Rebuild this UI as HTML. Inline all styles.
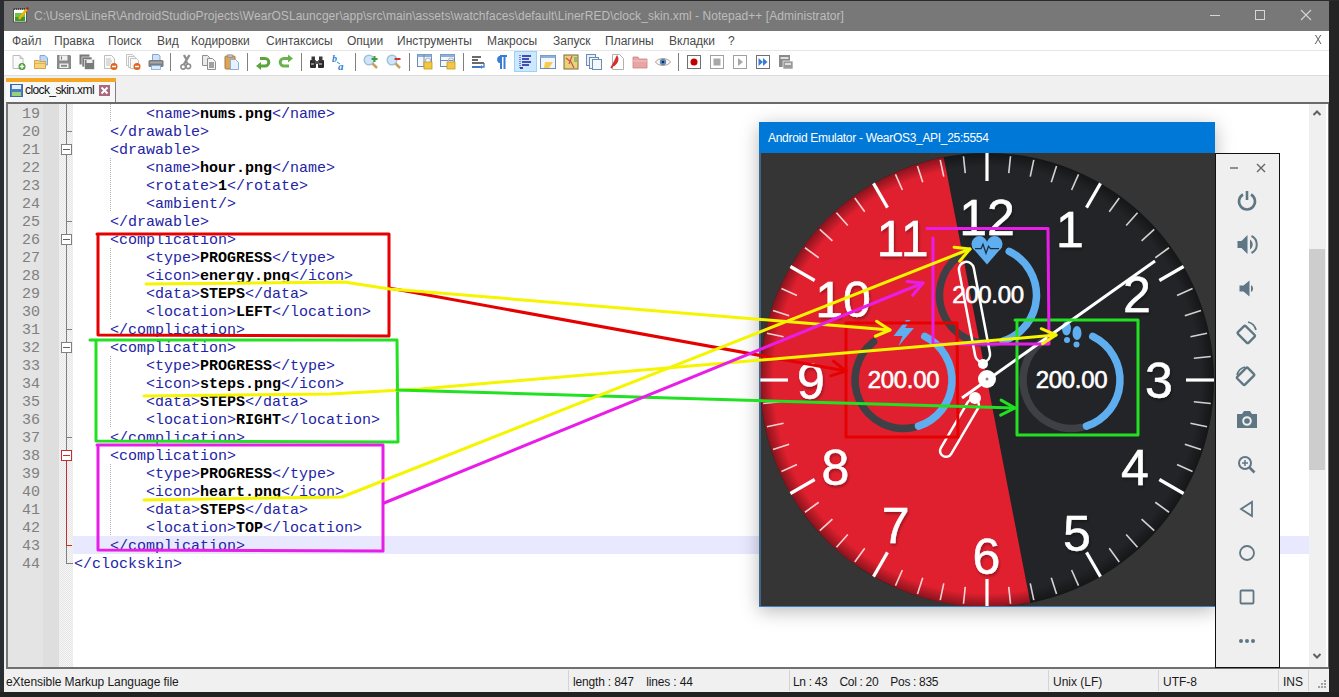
<!DOCTYPE html><html><head><meta charset="utf-8"><style>
*{margin:0;padding:0;box-sizing:border-box}
html,body{width:1339px;height:697px;overflow:hidden}
body{position:relative;background:#26292d;font-family:"Liberation Sans",sans-serif}
.a{position:absolute}
.code{font-family:"Liberation Mono",monospace;font-size:15px;line-height:18px;white-space:pre}
.t{color:#2424a6}
.b{color:#000;font-weight:bold}
.ln{color:#808080;text-align:right;width:32px}
.menu span{position:absolute;top:0;font-size:12px;color:#4a4a4a}
.st{font-size:12px;color:#1a1a1a;position:absolute;top:675px}
.sep{position:absolute;top:670px;width:1px;height:21px;background:#d4d4d4}
</style></head><body>
<div class="a" style="left:0;top:0;width:4px;height:697px;background:#2a2e33"></div>
<div class="a" style="left:1329px;top:0;width:10px;height:697px;background:#242424"></div>
<div class="a" style="left:0;top:692px;width:1339px;height:5px;background:#222"></div>
<div class="a" style="left:0;top:0;width:1339px;height:1px;background:#2b2b2b"></div>
<div class="a" style="left:4px;top:31px;width:1325px;height:661px;background:#f0f0f0"></div>
<div class="a" style="left:4px;top:1px;width:1325px;height:30px;background:#787878"></div>
<div class="a" style="left:34px;top:8px;font-size:12px;color:#bdbdbd;white-space:pre;line-height:16px;letter-spacing:0.055px">C:\Users\LineR\AndroidStudioProjects\WearOSLauncger\app\src\main\assets\watchfaces\default\LinerRED\clock_skin.xml - Notepad++ [Administrator]</div>
<svg class="a" style="left:12px;top:6px" width="18" height="18" viewBox="0 0 18 18">
<rect x="1.5" y="3" width="13" height="13" fill="#fff" stroke="#555" stroke-width="1"/>
<rect x="3" y="7" width="10" height="8" fill="#6cc24a"/>
<rect x="3" y="11" width="10" height="4" fill="#3a9a2a"/>
<path d="M2 3 h12" stroke="#333" stroke-width="1.5" stroke-dasharray="1 1"/>
<path d="M7 13 L15 3" stroke="#f0b000" stroke-width="2.5"/>
<circle cx="15.5" cy="2.5" r="1.3" fill="#a02020"/>
</svg>
<div class="a" style="left:1210px;top:15px;width:10px;height:1px;background:#d6d6d6"></div>
<div class="a" style="left:1255px;top:10px;width:10px;height:10px;border:1px solid #d6d6d6"></div>
<svg class="a" style="left:1300px;top:9px" width="12" height="12"><path d="M1 1 L11 11 M11 1 L1 11" stroke="#d6d6d6" stroke-width="1.1"/></svg>
<div class="a" style="left:4px;top:31px;width:1325px;height:20px;background:#fff"></div>
<div class="a" style="left:4px;top:50px;width:1325px;height:1px;background:#e6e6e6"></div>
<div class="a menu" style="left:0;top:34px;width:1339px;height:16px">
<span style="left:12px">Файл</span>
<span style="left:54px">Правка</span>
<span style="left:108px">Поиск</span>
<span style="left:157px">Вид</span>
<span style="left:191px">Кодировки</span>
<span style="left:266px">Синтаксисы</span>
<span style="left:347px">Опции</span>
<span style="left:397px">Инструменты</span>
<span style="left:487px">Макросы</span>
<span style="left:553px">Запуск</span>
<span style="left:605px">Плагины</span>
<span style="left:669px">Вкладки</span>
<span style="left:728px">?</span>
</div>
<div class="a" style="left:1314px;top:33px;font-size:12px;color:#666;transform:scaleX(0.9)">X</div>
<div class="a" style="left:4px;top:51px;width:1325px;height:24px;background:#fff"></div>
<div class="a" style="left:4px;top:75px;width:1325px;height:1px;background:#dcdcdc"></div>
<div class="a" style="left:514px;top:51px;width:23px;height:21px;background:#cce8ff;border:1px solid #99d1ff"></div>
<svg class="a" style="left:10px;top:54px" width="16" height="16" viewBox="0 0 16 16"><path d="M3 1.5h7l3 3v10H3z" fill="#fafafa" stroke="#bdbdbd"/><path d="M10 1.5v3h3" fill="#e0e0e0" stroke="#bdbdbd"/><circle cx="12" cy="12.5" r="3.5" fill="#4f9a3a"/><path d="M12 10.3v4.4M9.8 12.5h4.4" stroke="#fff" stroke-width="1.4"/></svg>
<svg class="a" style="left:33px;top:54px" width="16" height="16" viewBox="0 0 16 16"><path d="M7 1.5h5l2.5 2.5v7H7z" fill="#bcd6f4" stroke="#7fa6d6"/><path d="M1.5 6.5h4l1 1h6v7h-11z" fill="#f6d37c" stroke="#d4a540"/><path d="M1.5 9.5h11" stroke="#e0b450"/></svg>
<svg class="a" style="left:56px;top:54px" width="16" height="16" viewBox="0 0 16 16"><path d="M1 1h13l1 1v13H1z" fill="#8a8a8a"/><rect x="3.5" y="1.5" width="8" height="5" fill="#f0f0f0"/><rect x="5" y="2.5" width="1" height="3" fill="#777"/><rect x="3.5" y="9.5" width="9" height="4.5" fill="#f0f0f0"/><rect x="5" y="10.8" width="6" height="2" fill="#8a8a8a"/></svg>
<svg class="a" style="left:79px;top:54px" width="16" height="16" viewBox="0 0 16 16"><rect x="0.5" y="0.5" width="10" height="10" fill="#7a7a7a"/><rect x="3" y="3" width="10" height="10" fill="#7a7a7a" stroke="#fff" stroke-width="0.6"/><rect x="5.5" y="5.5" width="10" height="10" fill="#7a7a7a" stroke="#fff" stroke-width="0.6"/><rect x="7.5" y="6" width="6" height="3" fill="#eee"/></svg>
<svg class="a" style="left:102px;top:54px" width="16" height="16" viewBox="0 0 16 16"><path d="M2.5 1.5h7l3 3v10h-10z" fill="#fafafa" stroke="#bdbdbd"/><path d="M4 5h5M4 7h6M4 9h5M4 11h4" stroke="#b0b0b0" stroke-width="0.8"/><circle cx="12" cy="12.5" r="3.5" fill="#e0641e"/><path d="M10 12.5h4" stroke="#fff" stroke-width="1.5"/></svg>
<svg class="a" style="left:125px;top:54px" width="16" height="16" viewBox="0 0 16 16"><path d="M1.5 0.5h6l2 2v9h-8z" fill="#fafafa" stroke="#c4c4c4"/><path d="M3.5 2.5h6l2 2v9h-8z" fill="#fafafa" stroke="#c4c4c4"/><path d="M5.5 4.5h6l2 2v8h-8z" fill="#fafafa" stroke="#c4c4c4"/><circle cx="12" cy="12.5" r="3.5" fill="#e0641e"/><path d="M10 12.5h4" stroke="#fff" stroke-width="1.5"/></svg>
<svg class="a" style="left:148px;top:54px" width="16" height="16" viewBox="0 0 16 16"><path d="M4.5 0.5h6l1.5 1.5v5h-7.5z" fill="#cfe2f8" stroke="#7fa6d6"/><rect x="0.5" y="6" width="15" height="7" rx="1.5" fill="#7d7d7d"/><rect x="2" y="7.5" width="12" height="2" fill="#a8a8a8"/><rect x="3.5" y="11.5" width="9" height="4" fill="#d8ecff" stroke="#7fa6d6" stroke-width="0.8"/></svg>
<div class="a" style="left:170px;top:53px;width:1px;height:18px;background:#808080"></div>
<svg class="a" style="left:178px;top:54px" width="16" height="16" viewBox="0 0 16 16"><path d="M11.5 1 L5.5 11 M6 1 L8.8 6" stroke="#8f8f8f" stroke-width="2.4"/><circle cx="5.2" cy="12.8" r="2.3" fill="none" stroke="#8f8f8f" stroke-width="1.6"/><circle cx="10.3" cy="12.3" r="2.3" fill="none" stroke="#8f8f8f" stroke-width="1.6"/><path d="M8 7 L10 10.5" stroke="#8f8f8f" stroke-width="2"/></svg>
<svg class="a" style="left:201px;top:54px" width="16" height="16" viewBox="0 0 16 16"><path d="M1.5 1.5h5l2 2v8h-7z" fill="#eaeaea" stroke="#8e8e8e"/><path d="M6.5 4.5h5l3 3v8h-8z" fill="#f4f4f4" stroke="#8e8e8e"/><rect x="8" y="8" width="5" height="6" fill="#a0a0a0"/></svg>
<svg class="a" style="left:224px;top:54px" width="16" height="16" viewBox="0 0 16 16"><rect x="1" y="2" width="10" height="13" rx="1" fill="#d9a45c" stroke="#a87a3a"/><rect x="3.5" y="0.8" width="5" height="2.5" fill="#bbb" stroke="#888" stroke-width="0.6"/><path d="M6.5 5.5h5l3 3v7h-8z" fill="#e8f1fc" stroke="#88aee0"/></svg>
<div class="a" style="left:247px;top:53px;width:1px;height:18px;background:#808080"></div>
<svg class="a" style="left:255px;top:54px" width="16" height="16" viewBox="0 0 16 16"><path d="M5 4.5h5a3.8 3.8 0 0 1 0 7.6H5" fill="none" stroke="#5aa63c" stroke-width="3"/><path d="M1 12 L6 8 V16 Z" fill="#5aa63c"/></svg>
<svg class="a" style="left:278px;top:54px" width="16" height="16" viewBox="0 0 16 16"><path d="M11 4.5H6a3.8 3.8 0 0 0 0 7.6h5" fill="none" stroke="#6ab34c" stroke-width="3"/><path d="M15 4.5 L10 0.5 V8.5 Z" fill="#6ab34c"/></svg>
<div class="a" style="left:301px;top:53px;width:1px;height:18px;background:#808080"></div>
<svg class="a" style="left:309px;top:54px" width="16" height="16" viewBox="0 0 16 16"><rect x="1" y="6" width="6" height="8" rx="1" fill="#2b2b2b"/><rect x="9" y="6" width="6" height="8" rx="1" fill="#2b2b2b"/><rect x="2.5" y="2.5" width="3.5" height="5" fill="#3a3a3a"/><rect x="10" y="2.5" width="3.5" height="5" fill="#3a3a3a"/><rect x="6" y="7" width="4" height="3" fill="#555"/><rect x="2" y="9" width="3" height="2" fill="#888"/><rect x="10" y="9" width="3" height="2" fill="#888"/></svg>
<svg class="a" style="left:332px;top:54px" width="16" height="16" viewBox="0 0 16 16"><text x="0" y="8" font-family="Liberation Serif" font-style="italic" font-weight="bold" font-size="10" fill="#2f7fd0">b</text><text x="6" y="15.5" font-family="Liberation Serif" font-style="italic" font-weight="bold" font-size="11" fill="#2f7fd0">a</text><path d="M5 8 L8 10" stroke="#2f7fd0"/></svg>
<div class="a" style="left:355px;top:53px;width:1px;height:18px;background:#808080"></div>
<svg class="a" style="left:363px;top:54px" width="16" height="16" viewBox="0 0 16 16"><circle cx="6" cy="6" r="4.8" fill="#cfe6f8" stroke="#9cc0dd" stroke-width="1.4"/><path d="M9.5 9.5 L14 14" stroke="#c8a060" stroke-width="2.5"/><path d="M11.5 2v6M8.5 5h6" stroke="#3e9a3e" stroke-width="2"/></svg>
<svg class="a" style="left:386px;top:54px" width="16" height="16" viewBox="0 0 16 16"><circle cx="6" cy="6" r="4.8" fill="#cfe6f8" stroke="#9cc0dd" stroke-width="1.4"/><path d="M9.5 9.5 L14 14" stroke="#c8a060" stroke-width="2.5"/><path d="M8.5 5h6" stroke="#d83030" stroke-width="2"/></svg>
<div class="a" style="left:409px;top:53px;width:1px;height:18px;background:#808080"></div>
<svg class="a" style="left:417px;top:54px" width="16" height="16" viewBox="0 0 16 16"><rect x="0.5" y="0.5" width="14" height="12" fill="#f4f8fc" stroke="#6a8db5"/><rect x="0.5" y="0.5" width="14" height="2.5" fill="#8eb0d8"/><path d="M7 0.5v12" stroke="#6a8db5"/><rect x="7" y="8" width="8" height="7" fill="#f2c744" stroke="#c49a20" stroke-width="0.8"/><path d="M8.5 8V6.5a2.5 2.5 0 0 1 5 0V8" fill="none" stroke="#b8b8b8" stroke-width="1.2"/></svg>
<svg class="a" style="left:440px;top:54px" width="16" height="16" viewBox="0 0 16 16"><rect x="0.5" y="0.5" width="14" height="12" fill="#f4f8fc" stroke="#6a8db5"/><rect x="0.5" y="0.5" width="14" height="2.5" fill="#8eb0d8"/><path d="M0.5 6.5h14" stroke="#6a8db5"/><rect x="7" y="8" width="8" height="7" fill="#f2c744" stroke="#c49a20" stroke-width="0.8"/><path d="M8.5 8V6.5a2.5 2.5 0 0 1 5 0V8" fill="none" stroke="#b8b8b8" stroke-width="1.2"/></svg>
<div class="a" style="left:463px;top:53px;width:1px;height:18px;background:#808080"></div>
<svg class="a" style="left:471px;top:54px" width="16" height="16" viewBox="0 0 16 16"><path d="M1 3h9M1 6h6M1 9h12M1 13h8" stroke="#3b3b3b" stroke-width="1.3"/><path d="M1 13h9" stroke="#3a7bd5" stroke-width="1.6"/><path d="M13 9v4h-3" fill="none" stroke="#3a7bd5" stroke-width="1.3"/><path d="M9 13l2-2v4z" fill="#3a7bd5"/></svg>
<svg class="a" style="left:493px;top:54px" width="16" height="16" viewBox="0 0 16 16"><path d="M7 2h7M8 2v13M11.5 2v13" stroke="#3a7bd5" stroke-width="2"/><path d="M8 2a3.2 3.2 0 0 0 0 7" fill="#3a7bd5" stroke="#3a7bd5" stroke-width="1"/></svg>
<svg class="a" style="left:517px;top:54px" width="16" height="16" viewBox="0 0 16 16"><path d="M3 1v14" stroke="#1a1aa0" stroke-width="1" stroke-dasharray="1 1"/><path d="M5 2h9M5 5h7M5 8h9M5 11h7" stroke="#1a1aa0" stroke-width="1.6"/><path d="M3 14h3" stroke="#1a1aa0" stroke-width="1.6"/></svg>
<svg class="a" style="left:540px;top:54px" width="16" height="16" viewBox="0 0 16 16"><rect x="0.5" y="1.5" width="15" height="13" fill="#f2f6fb" stroke="#6a8db5"/><rect x="0.5" y="1.5" width="15" height="2.5" fill="#8eb0d8"/><path d="M5 8h8l-4 6h-5z" fill="#f4cc50"/></svg>
<svg class="a" style="left:563px;top:54px" width="16" height="16" viewBox="0 0 16 16"><rect x="1" y="1" width="14" height="14" fill="#e9d27a" stroke="#7a6a3a"/><path d="M3 4l5 4 3 6M9 2l-3 8" stroke="#d05050" stroke-width="1.2" fill="none"/><path d="M11 3h3v5h-3z" fill="#88c070"/></svg>
<svg class="a" style="left:586px;top:54px" width="16" height="16" viewBox="0 0 16 16"><rect x="0.5" y="0.5" width="9" height="11" fill="#e8f0fb" stroke="#6a8db5"/><rect x="3.5" y="3.5" width="9" height="11" fill="#eef4fc" stroke="#6a8db5"/><rect x="6.5" y="5.5" width="9" height="10" fill="#f4f8fd" stroke="#6a8db5"/></svg>
<svg class="a" style="left:609px;top:54px" width="16" height="16" viewBox="0 0 16 16"><path d="M3.5 0.5h7l4 4v11h-11z" fill="#fff" stroke="#b0b0b0"/><path d="M2 14c3-4 5-9 6-11 2 4-2 8-5 9" fill="none" stroke="#d03030" stroke-width="1.8"/></svg>
<svg class="a" style="left:632px;top:54px" width="16" height="16" viewBox="0 0 16 16"><path d="M1 3h5l1 2h8v9H1z" fill="#e9a4a4" stroke="#cc8080" stroke-width="0.8"/><path d="M1 7h14" stroke="#f5c6c6"/></svg>
<svg class="a" style="left:655px;top:54px" width="16" height="16" viewBox="0 0 16 16"><path d="M0.5 8C3 3.5 13 3.5 15.5 8 13 12.5 3 12.5 0.5 8z" fill="#f8f8f8" stroke="#b39a80"/><circle cx="8" cy="8" r="3.2" fill="#5a8bc6"/><circle cx="8" cy="8" r="1.3" fill="#1a2a50"/></svg>
<div class="a" style="left:678px;top:53px;width:1px;height:18px;background:#808080"></div>
<svg class="a" style="left:686px;top:54px" width="16" height="16" viewBox="0 0 16 16"><rect x="1.5" y="1.5" width="13" height="13" fill="#fff" stroke="#707070"/><circle cx="8" cy="8" r="3.5" fill="#c00000"/></svg>
<svg class="a" style="left:709px;top:54px" width="16" height="16" viewBox="0 0 16 16"><rect x="1.5" y="1.5" width="13" height="13" fill="#fff" stroke="#a0a0a0"/><rect x="4.5" y="4.5" width="7" height="7" fill="#a8a8a8"/></svg>
<svg class="a" style="left:732px;top:54px" width="16" height="16" viewBox="0 0 16 16"><rect x="1.5" y="1.5" width="13" height="13" fill="#fff" stroke="#a0a0a0"/><path d="M6 4l5 4-5 4z" fill="#a8a8a8"/></svg>
<svg class="a" style="left:755px;top:54px" width="16" height="16" viewBox="0 0 16 16"><rect x="1.5" y="1.5" width="13" height="13" fill="#fff" stroke="#707070"/><path d="M3.5 4l4.5 4-4.5 4zM8 4l4.5 4L8 12z" fill="#3a7bd5"/></svg>
<svg class="a" style="left:778px;top:54px" width="16" height="16" viewBox="0 0 16 16"><rect x="1" y="1" width="11" height="12" fill="#8a8a8a"/><rect x="2.5" y="3" width="8" height="2" fill="#ddd"/><rect x="5" y="7" width="10" height="8" fill="#9a9a9a" stroke="#fff" stroke-width="0.6"/><rect x="7" y="9" width="6" height="2" fill="#ddd"/></svg>
<div class="a" style="left:6px;top:78px;width:110px;height:25px;background:#f7f7f7;border-right:1px solid #808080"></div>
<div class="a" style="left:6px;top:78px;width:110px;height:4px;background:#f5a623"></div>
<svg class="a" style="left:10px;top:84px" width="13" height="13" viewBox="0 0 13 13">
<rect x="0.5" y="0.5" width="12" height="12" fill="#4a7fc1" stroke="#3b6aa8"/>
<rect x="2" y="1" width="9" height="4" fill="#e8f0fa"/>
<rect x="2" y="8" width="9" height="4" fill="#9bd07a"/>
</svg>
<div class="a" style="left:25px;top:83px;font-size:12px;color:#111;letter-spacing:-0.6px">clock_skin.xml</div>
<svg class="a" style="left:99px;top:85px" width="11" height="11" viewBox="0 0 11 11">
<rect x="0" y="0" width="11" height="11" fill="#a8687c"/>
<path d="M2.5 2.5 L8.5 8.5 M8.5 2.5 L2.5 8.5" stroke="#fff" stroke-width="2"/>
</svg>
<div class="a" style="left:6px;top:102px;width:1323px;height:567px;background:#fff;border:1px solid #6f6f6f;border-top:2px solid #6a6a6a;border-bottom:2px solid #707070;border-left:2px solid #777"></div>
<div class="a" style="left:8px;top:104px;width:35px;height:563px;background:#e4e4e4"></div>
<div class="a" style="left:43px;top:104px;width:16px;height:563px;background:#dedede"></div>
<div class="a" style="left:59px;top:104px;width:14px;height:563px;background:#efefef;background-image:repeating-conic-gradient(#e6e6e6 0 25%,#f6f6f6 0 50%);background-size:2px 2px"></div>
<div class="a" style="left:73px;top:536px;width:1236px;height:18px;background:#e8e8ff"></div>
<div class="a" style="left:66px;top:104px;width:1px;height:356px;background:#808080"></div>
<div class="a" style="left:66px;top:131px;width:6px;height:1px;background:#808080"></div>
<div class="a" style="left:66px;top:221px;width:6px;height:1px;background:#808080"></div>
<div class="a" style="left:66px;top:329px;width:6px;height:1px;background:#808080"></div>
<div class="a" style="left:66px;top:437px;width:6px;height:1px;background:#808080"></div>
<div class="a" style="left:61px;top:144px;width:11px;height:11px;background:#fff;border:1px solid #808080"></div><div class="a" style="left:63px;top:149px;width:7px;height:1px;background:#606060"></div>
<div class="a" style="left:61px;top:234px;width:11px;height:11px;background:#fff;border:1px solid #808080"></div><div class="a" style="left:63px;top:239px;width:7px;height:1px;background:#606060"></div>
<div class="a" style="left:61px;top:342px;width:11px;height:11px;background:#fff;border:1px solid #808080"></div><div class="a" style="left:63px;top:347px;width:7px;height:1px;background:#606060"></div>
<div class="a" style="left:66px;top:461px;width:1px;height:84px;background:#c03030"></div>
<div class="a" style="left:66px;top:545px;width:6px;height:1px;background:#c03030"></div>
<div class="a" style="left:61px;top:450px;width:11px;height:11px;background:#fff;border:1px solid #c03030"></div><div class="a" style="left:63px;top:455px;width:7px;height:1px;background:#c03030"></div>
<div class="a" style="left:66px;top:546px;width:1px;height:18px;background:#808080"></div>
<div class="a" style="left:66px;top:563px;width:7px;height:1px;background:#808080"></div>
<div class="a" style="left:110px;top:104px;width:1px;height:18px;background-image:repeating-linear-gradient(#b0b0b0 0 1px,transparent 1px 2px)"></div>
<div class="a" style="left:110px;top:158px;width:1px;height:54px;background-image:repeating-linear-gradient(#b0b0b0 0 1px,transparent 1px 2px)"></div>
<div class="a" style="left:110px;top:248px;width:1px;height:72px;background-image:repeating-linear-gradient(#b0b0b0 0 1px,transparent 1px 2px)"></div>
<div class="a" style="left:110px;top:356px;width:1px;height:72px;background-image:repeating-linear-gradient(#b0b0b0 0 1px,transparent 1px 2px)"></div>
<div class="a" style="left:110px;top:464px;width:1px;height:72px;background-image:repeating-linear-gradient(#b0b0b0 0 1px,transparent 1px 2px)"></div>
<div class="a code ln" style="left:8px;top:106px">19</div>
<div class="a code" style="left:74px;top:106px">        <span class="t">&lt;name&gt;</span><span class="b">nums.png</span><span class="t">&lt;/name&gt;</span></div>
<div class="a code ln" style="left:8px;top:124px">20</div>
<div class="a code" style="left:74px;top:124px">    <span class="t">&lt;/drawable&gt;</span></div>
<div class="a code ln" style="left:8px;top:142px">21</div>
<div class="a code" style="left:74px;top:142px">    <span class="t">&lt;drawable&gt;</span></div>
<div class="a code ln" style="left:8px;top:160px">22</div>
<div class="a code" style="left:74px;top:160px">        <span class="t">&lt;name&gt;</span><span class="b">hour.png</span><span class="t">&lt;/name&gt;</span></div>
<div class="a code ln" style="left:8px;top:178px">23</div>
<div class="a code" style="left:74px;top:178px">        <span class="t">&lt;rotate&gt;</span><span class="b">1</span><span class="t">&lt;/rotate&gt;</span></div>
<div class="a code ln" style="left:8px;top:196px">24</div>
<div class="a code" style="left:74px;top:196px">        <span class="t">&lt;ambient/&gt;</span></div>
<div class="a code ln" style="left:8px;top:214px">25</div>
<div class="a code" style="left:74px;top:214px">    <span class="t">&lt;/drawable&gt;</span></div>
<div class="a code ln" style="left:8px;top:232px">26</div>
<div class="a code" style="left:74px;top:232px">    <span class="t">&lt;complication&gt;</span></div>
<div class="a code ln" style="left:8px;top:250px">27</div>
<div class="a code" style="left:74px;top:250px">        <span class="t">&lt;type&gt;</span><span class="b">PROGRESS</span><span class="t">&lt;/type&gt;</span></div>
<div class="a code ln" style="left:8px;top:268px">28</div>
<div class="a code" style="left:74px;top:268px">        <span class="t">&lt;icon&gt;</span><span class="b">energy.png</span><span class="t">&lt;/icon&gt;</span></div>
<div class="a code ln" style="left:8px;top:286px">29</div>
<div class="a code" style="left:74px;top:286px">        <span class="t">&lt;data&gt;</span><span class="b">STEPS</span><span class="t">&lt;/data&gt;</span></div>
<div class="a code ln" style="left:8px;top:304px">30</div>
<div class="a code" style="left:74px;top:304px">        <span class="t">&lt;location&gt;</span><span class="b">LEFT</span><span class="t">&lt;/location&gt;</span></div>
<div class="a code ln" style="left:8px;top:322px">31</div>
<div class="a code" style="left:74px;top:322px">    <span class="t">&lt;/complication&gt;</span></div>
<div class="a code ln" style="left:8px;top:340px">32</div>
<div class="a code" style="left:74px;top:340px">    <span class="t">&lt;complication&gt;</span></div>
<div class="a code ln" style="left:8px;top:358px">33</div>
<div class="a code" style="left:74px;top:358px">        <span class="t">&lt;type&gt;</span><span class="b">PROGRESS</span><span class="t">&lt;/type&gt;</span></div>
<div class="a code ln" style="left:8px;top:376px">34</div>
<div class="a code" style="left:74px;top:376px">        <span class="t">&lt;icon&gt;</span><span class="b">steps.png</span><span class="t">&lt;/icon&gt;</span></div>
<div class="a code ln" style="left:8px;top:394px">35</div>
<div class="a code" style="left:74px;top:394px">        <span class="t">&lt;data&gt;</span><span class="b">STEPS</span><span class="t">&lt;/data&gt;</span></div>
<div class="a code ln" style="left:8px;top:412px">36</div>
<div class="a code" style="left:74px;top:412px">        <span class="t">&lt;location&gt;</span><span class="b">RIGHT</span><span class="t">&lt;/location&gt;</span></div>
<div class="a code ln" style="left:8px;top:430px">37</div>
<div class="a code" style="left:74px;top:430px">    <span class="t">&lt;/complication&gt;</span></div>
<div class="a code ln" style="left:8px;top:448px">38</div>
<div class="a code" style="left:74px;top:448px">    <span class="t">&lt;complication&gt;</span></div>
<div class="a code ln" style="left:8px;top:466px">39</div>
<div class="a code" style="left:74px;top:466px">        <span class="t">&lt;type&gt;</span><span class="b">PROGRESS</span><span class="t">&lt;/type&gt;</span></div>
<div class="a code ln" style="left:8px;top:484px">40</div>
<div class="a code" style="left:74px;top:484px">        <span class="t">&lt;icon&gt;</span><span class="b">heart.png</span><span class="t">&lt;/icon&gt;</span></div>
<div class="a code ln" style="left:8px;top:502px">41</div>
<div class="a code" style="left:74px;top:502px">        <span class="t">&lt;data&gt;</span><span class="b">STEPS</span><span class="t">&lt;/data&gt;</span></div>
<div class="a code ln" style="left:8px;top:520px">42</div>
<div class="a code" style="left:74px;top:520px">        <span class="t">&lt;location&gt;</span><span class="b">TOP</span><span class="t">&lt;/location&gt;</span></div>
<div class="a code ln" style="left:8px;top:538px">43</div>
<div class="a code" style="left:74px;top:538px">    <span class="t">&lt;/complication&gt;</span></div>
<div class="a code ln" style="left:8px;top:556px">44</div>
<div class="a code" style="left:74px;top:556px"><span class="t">&lt;/clockskin&gt;</span></div>
<div class="a" style="left:1309px;top:104px;width:17px;height:563px;background:#f0f0f0"></div>
<div class="a" style="left:1309px;top:249px;width:16px;height:221px;background:#cdcdcd"></div>
<svg class="a" style="left:1312px;top:108px" width="10" height="10"><path d="M1.5 7 L5 3.5 L8.5 7" fill="none" stroke="#606060" stroke-width="2"/></svg>
<svg class="a" style="left:1312px;top:651px" width="10" height="10"><path d="M1.5 3 L5 6.5 L8.5 3" fill="none" stroke="#606060" stroke-width="2"/></svg>
<div class="a" style="left:4px;top:669px;width:1325px;height:23px;background:#f0f0f0"></div>
<div class="st" style="left:6px;letter-spacing:-0.07px">eXtensible Markup Language file</div>
<div class="sep" style="left:568px"></div>
<div class="sep" style="left:789px"></div>
<div class="sep" style="left:1048px"></div>
<div class="sep" style="left:1158px"></div>
<div class="sep" style="left:1278px"></div>
<div class="sep" style="left:1308px"></div>
<div class="st" style="left:573px;white-space:pre;letter-spacing:-0.17px">length : 847    lines : 44</div>
<div class="st" style="left:793px;white-space:pre;letter-spacing:-0.32px">Ln : 43    Col : 20    Pos : 835</div>
<div class="st" style="left:1053px">Unix (LF)</div>
<div class="st" style="left:1163px">UTF-8</div>
<div class="st" style="left:1283px">INS</div>
<svg class="a" style="left:1316px;top:678px" width="12" height="12"><g fill="#a0a0a0"><rect x="8" y="2" width="2" height="2"/><rect x="5" y="5" width="2" height="2"/><rect x="8" y="5" width="2" height="2"/><rect x="2" y="8" width="2" height="2"/><rect x="5" y="8" width="2" height="2"/><rect x="8" y="8" width="2" height="2"/></g></svg>
<div class="a" style="left:759px;top:122px;width:456px;height:485px;box-shadow:0 4px 18px rgba(0,0,0,0.28)"></div>
<div class="a" style="left:1215px;top:153px;width:65px;height:515px;background:#efefef;border:1px solid #111"></div>
<div class="a" style="left:1215px;top:122px;width:0;height:0"></div>
<div class="a" style="left:759px;top:122px;width:456px;height:31px;background:#0078d7"></div>
<div class="a" style="left:768px;top:131px;font-size:12px;color:#fff;white-space:pre;letter-spacing:-0.3px">Android Emulator - WearOS3_API_25:5554</div>
<svg class="a" style="left:0;top:0" width="1339" height="697" viewBox="0 0 1339 697">
<defs><clipPath id="cc"><rect x="759" y="153" width="456" height="454"/></clipPath>
<radialGradient id="rim" cx="987" cy="380" r="227" gradientUnits="userSpaceOnUse"><stop offset="0.94" stop-color="#000" stop-opacity="0"/><stop offset="0.985" stop-color="#000" stop-opacity="0.3"/><stop offset="1" stop-color="#000" stop-opacity="0.4"/></radialGradient>
<filter id="ns" x="-20%" y="-20%" width="140%" height="140%"><feDropShadow dx="1" dy="2" stdDeviation="1.5" flood-color="#000" flood-opacity="0.35"/></filter>
</defs>
<g clip-path="url(#cc)">
<rect x="759" y="153" width="456" height="454" fill="#353535"/>
<circle cx="987" cy="380" r="227" fill="#232427"/>
<path d="M943.69 157.17 A227 227 0 0 0 1030.31 602.83 Z" fill="#e1202f"/>
<circle cx="987" cy="380" r="227" fill="url(#rim)"/>
<line x1="987" y1="181" x2="987" y2="153" stroke="#fff" stroke-opacity="1" stroke-width="3.2"/>
<line x1="1008.74" y1="173.14" x2="1010.52" y2="156.23" stroke="#fff" stroke-opacity="0.8" stroke-width="1.6"/>
<line x1="1030.25" y1="176.55" x2="1033.78" y2="159.92" stroke="#fff" stroke-opacity="0.8" stroke-width="1.6"/>
<line x1="1051.28" y1="182.18" x2="1056.53" y2="166.01" stroke="#fff" stroke-opacity="0.8" stroke-width="1.6"/>
<line x1="1071.6" y1="189.98" x2="1078.52" y2="174.45" stroke="#fff" stroke-opacity="0.8" stroke-width="1.6"/>
<line x1="1086.5" y1="207.66" x2="1100.5" y2="183.41" stroke="#fff" stroke-opacity="1" stroke-width="3.2"/>
<line x1="1109.26" y1="211.72" x2="1119.25" y2="197.97" stroke="#fff" stroke-opacity="0.8" stroke-width="1.6"/>
<line x1="1126.18" y1="225.43" x2="1137.55" y2="212.79" stroke="#fff" stroke-opacity="0.8" stroke-width="1.6"/>
<line x1="1141.57" y1="240.82" x2="1154.21" y2="229.45" stroke="#fff" stroke-opacity="0.8" stroke-width="1.6"/>
<line x1="1155.28" y1="257.74" x2="1169.03" y2="247.75" stroke="#fff" stroke-opacity="0.8" stroke-width="1.6"/>
<line x1="1159.34" y1="280.5" x2="1183.59" y2="266.5" stroke="#fff" stroke-opacity="1" stroke-width="3.2"/>
<line x1="1177.02" y1="295.4" x2="1192.55" y2="288.48" stroke="#fff" stroke-opacity="0.8" stroke-width="1.6"/>
<line x1="1184.82" y1="315.72" x2="1200.99" y2="310.47" stroke="#fff" stroke-opacity="0.8" stroke-width="1.6"/>
<line x1="1190.45" y1="336.75" x2="1207.08" y2="333.22" stroke="#fff" stroke-opacity="0.8" stroke-width="1.6"/>
<line x1="1193.86" y1="358.26" x2="1210.77" y2="356.48" stroke="#fff" stroke-opacity="0.8" stroke-width="1.6"/>
<line x1="1186" y1="380" x2="1214" y2="380" stroke="#fff" stroke-opacity="1" stroke-width="3.2"/>
<line x1="1193.86" y1="401.74" x2="1210.77" y2="403.52" stroke="#fff" stroke-opacity="0.8" stroke-width="1.6"/>
<line x1="1190.45" y1="423.25" x2="1207.08" y2="426.78" stroke="#fff" stroke-opacity="0.8" stroke-width="1.6"/>
<line x1="1184.82" y1="444.28" x2="1200.99" y2="449.53" stroke="#fff" stroke-opacity="0.8" stroke-width="1.6"/>
<line x1="1177.02" y1="464.6" x2="1192.55" y2="471.52" stroke="#fff" stroke-opacity="0.8" stroke-width="1.6"/>
<line x1="1159.34" y1="479.5" x2="1183.59" y2="493.5" stroke="#fff" stroke-opacity="1" stroke-width="3.2"/>
<line x1="1155.28" y1="502.26" x2="1169.03" y2="512.25" stroke="#fff" stroke-opacity="0.8" stroke-width="1.6"/>
<line x1="1141.57" y1="519.18" x2="1154.21" y2="530.55" stroke="#fff" stroke-opacity="0.8" stroke-width="1.6"/>
<line x1="1126.18" y1="534.57" x2="1137.55" y2="547.21" stroke="#fff" stroke-opacity="0.8" stroke-width="1.6"/>
<line x1="1109.26" y1="548.28" x2="1119.25" y2="562.03" stroke="#fff" stroke-opacity="0.8" stroke-width="1.6"/>
<line x1="1086.5" y1="552.34" x2="1100.5" y2="576.59" stroke="#fff" stroke-opacity="1" stroke-width="3.2"/>
<line x1="1071.6" y1="570.02" x2="1078.52" y2="585.55" stroke="#fff" stroke-opacity="0.8" stroke-width="1.6"/>
<line x1="1051.28" y1="577.82" x2="1056.53" y2="593.99" stroke="#fff" stroke-opacity="0.8" stroke-width="1.6"/>
<line x1="1030.25" y1="583.45" x2="1033.78" y2="600.08" stroke="#fff" stroke-opacity="0.8" stroke-width="1.6"/>
<line x1="1008.74" y1="586.86" x2="1010.52" y2="603.77" stroke="#fff" stroke-opacity="0.8" stroke-width="1.6"/>
<line x1="987" y1="579" x2="987" y2="607" stroke="#fff" stroke-opacity="1" stroke-width="3.2"/>
<line x1="965.26" y1="586.86" x2="963.48" y2="603.77" stroke="#fff" stroke-opacity="0.8" stroke-width="1.6"/>
<line x1="943.75" y1="583.45" x2="940.22" y2="600.08" stroke="#fff" stroke-opacity="0.8" stroke-width="1.6"/>
<line x1="922.72" y1="577.82" x2="917.47" y2="593.99" stroke="#fff" stroke-opacity="0.8" stroke-width="1.6"/>
<line x1="902.4" y1="570.02" x2="895.48" y2="585.55" stroke="#fff" stroke-opacity="0.8" stroke-width="1.6"/>
<line x1="887.5" y1="552.34" x2="873.5" y2="576.59" stroke="#fff" stroke-opacity="1" stroke-width="3.2"/>
<line x1="864.74" y1="548.28" x2="854.75" y2="562.03" stroke="#fff" stroke-opacity="0.8" stroke-width="1.6"/>
<line x1="847.82" y1="534.57" x2="836.45" y2="547.21" stroke="#fff" stroke-opacity="0.8" stroke-width="1.6"/>
<line x1="832.43" y1="519.18" x2="819.79" y2="530.55" stroke="#fff" stroke-opacity="0.8" stroke-width="1.6"/>
<line x1="818.72" y1="502.26" x2="804.97" y2="512.25" stroke="#fff" stroke-opacity="0.8" stroke-width="1.6"/>
<line x1="814.66" y1="479.5" x2="790.41" y2="493.5" stroke="#fff" stroke-opacity="1" stroke-width="3.2"/>
<line x1="796.98" y1="464.6" x2="781.45" y2="471.52" stroke="#fff" stroke-opacity="0.8" stroke-width="1.6"/>
<line x1="789.18" y1="444.28" x2="773.01" y2="449.53" stroke="#fff" stroke-opacity="0.8" stroke-width="1.6"/>
<line x1="783.55" y1="423.25" x2="766.92" y2="426.78" stroke="#fff" stroke-opacity="0.8" stroke-width="1.6"/>
<line x1="780.14" y1="401.74" x2="763.23" y2="403.52" stroke="#fff" stroke-opacity="0.8" stroke-width="1.6"/>
<line x1="788" y1="380" x2="760" y2="380" stroke="#fff" stroke-opacity="1" stroke-width="3.2"/>
<line x1="780.14" y1="358.26" x2="763.23" y2="356.48" stroke="#fff" stroke-opacity="0.8" stroke-width="1.6"/>
<line x1="783.55" y1="336.75" x2="766.92" y2="333.22" stroke="#fff" stroke-opacity="0.8" stroke-width="1.6"/>
<line x1="789.18" y1="315.72" x2="773.01" y2="310.47" stroke="#fff" stroke-opacity="0.8" stroke-width="1.6"/>
<line x1="796.98" y1="295.4" x2="781.45" y2="288.48" stroke="#fff" stroke-opacity="0.8" stroke-width="1.6"/>
<line x1="814.66" y1="280.5" x2="790.41" y2="266.5" stroke="#fff" stroke-opacity="1" stroke-width="3.2"/>
<line x1="818.72" y1="257.74" x2="804.97" y2="247.75" stroke="#fff" stroke-opacity="0.8" stroke-width="1.6"/>
<line x1="832.43" y1="240.82" x2="819.79" y2="229.45" stroke="#fff" stroke-opacity="0.8" stroke-width="1.6"/>
<line x1="847.82" y1="225.43" x2="836.45" y2="212.79" stroke="#fff" stroke-opacity="0.8" stroke-width="1.6"/>
<line x1="864.74" y1="211.72" x2="854.75" y2="197.97" stroke="#fff" stroke-opacity="0.8" stroke-width="1.6"/>
<line x1="887.5" y1="207.66" x2="873.5" y2="183.41" stroke="#fff" stroke-opacity="1" stroke-width="3.2"/>
<line x1="902.4" y1="189.98" x2="895.48" y2="174.45" stroke="#fff" stroke-opacity="0.8" stroke-width="1.6"/>
<line x1="922.72" y1="182.18" x2="917.47" y2="166.01" stroke="#fff" stroke-opacity="0.8" stroke-width="1.6"/>
<line x1="943.75" y1="176.55" x2="940.22" y2="159.92" stroke="#fff" stroke-opacity="0.8" stroke-width="1.6"/>
<line x1="965.26" y1="173.14" x2="963.48" y2="156.23" stroke="#fff" stroke-opacity="0.8" stroke-width="1.6"/>
<g font-family="Liberation Sans" font-size="50" fill="#fff" stroke="#fff" stroke-width="0.5" text-anchor="middle" filter="url(#ns)">
<text x="987" y="235">12</text>
<text x="1070" y="247">1</text>
<text x="1137" y="312">2</text>
<text x="1159" y="398">3</text>
<text x="1135" y="485">4</text>
<text x="1077" y="551">5</text>
<text x="986.4" y="574">6</text>
<text x="895.6" y="543">7</text>
<text x="835.5" y="485">8</text>
<text x="811" y="399">9</text>
<text x="843" y="317">10</text>
<text x="902.5" y="256.4">11</text>
</g>
<path d="M998.08 342.44 A48.5 48.5 0 0 1 958.14 256.78" fill="none" stroke="#3f4046" stroke-width="7.5" stroke-linecap="round"/>
<path d="M1009.26 251.41 A48.5 48.5 0 0 1 1002.99 341.13" fill="none" stroke="#5eaef0" stroke-width="7.5" stroke-linecap="round"/>
<text x="988" y="302.5" font-family="Liberation Sans" font-size="24" fill="#fff" stroke="#fff" stroke-width="0.6" text-anchor="middle" letter-spacing="-0.3">200.00</text>
<g transform="translate(987 236.2)" fill="#5eaef0"><circle cx="-7.6" cy="7.8" r="7.9"/><circle cx="7.6" cy="7.8" r="7.9"/><path d="M-14.9 11 L0 28.4 L14.9 11 L0 6 Z"/></g>
<path transform="translate(987 236.2)" d="M-12 12.5 H-6 L-4 8 L-1 17 L1.5 10 L3.5 12.5 H12" fill="none" stroke="#1e3040" stroke-width="1.3"/>
<path d="M913.58 427.44 A48.5 48.5 0 0 1 873.64 341.78" fill="none" stroke="#3f4046" stroke-width="7.5" stroke-linecap="round"/>
<path d="M924.76 336.41 A48.5 48.5 0 0 1 918.49 426.13" fill="none" stroke="#5eaef0" stroke-width="7.5" stroke-linecap="round"/>
<text x="903.5" y="387.5" font-family="Liberation Sans" font-size="24" fill="#fff" stroke="#fff" stroke-width="0.6" text-anchor="middle" letter-spacing="-0.3">200.00</text>
<path transform="translate(903.5 333)" d="M2.5 -13 L-10 3 H-1 L-5 13 L10.5 -5 H1.5 L7 -13 Z" fill="#5eaef0"/>
<path d="M1081.58 427.44 A48.5 48.5 0 0 1 1041.64 341.78" fill="none" stroke="#3f4046" stroke-width="7.5" stroke-linecap="round"/>
<path d="M1092.76 336.41 A48.5 48.5 0 0 1 1086.49 426.13" fill="none" stroke="#5eaef0" stroke-width="7.5" stroke-linecap="round"/>
<text x="1071.5" y="387.5" font-family="Liberation Sans" font-size="24" fill="#fff" stroke="#fff" stroke-width="0.6" text-anchor="middle" letter-spacing="-0.3">200.00</text>
<g transform="translate(1071.5 333)" fill="#5eaef0"><ellipse cx="-5" cy="-4.5" rx="4.5" ry="7"/><circle cx="-4.5" cy="7" r="3"/><ellipse cx="5.5" cy="0" rx="4.5" ry="7"/><circle cx="5" cy="11.5" r="3"/></g>
<rect x="0" y="-7.5" width="101.79" height="15" rx="7.5" transform="translate(984 362) rotate(-100.76)" fill="none" stroke="#fff" stroke-width="2.5"/>
<rect x="0" y="-6" width="65" height="12" rx="6" transform="translate(976 400) rotate(120.51)" fill="none" stroke="#fff" stroke-width="2.5"/>
<line x1="962" y1="398" x2="1155" y2="261" stroke="#fff" stroke-width="3"/>
<circle cx="975" cy="398" r="6" fill="#fff"/>
<circle cx="983" cy="364" r="5" fill="#fff"/>
<circle cx="987" cy="379" r="9" fill="#fff"/>
<circle cx="987" cy="379" r="1.5" fill="#888"/>
</g>
<rect x="759.5" y="153" width="1" height="454" fill="#4a98de"/>
<rect x="759" y="606" width="456" height="1" fill="#3d80c0"/>
<g fill="none" stroke="#666" stroke-width="1.4"><path d="M1230 168 h8"/><path d="M1257 164 l8 8 M1265 164 l-8 8"/></g>
<g stroke="#5f7784" fill="none" stroke-width="2.6">
<path d="M1243 194.5 A8 8 0 1 0 1251 194.5"/><path d="M1247 191 v9"/>
</g>
<g fill="#5f7784">
<path d="M1237.5 241 h4 l6 -6 v19 l-6 -6 h-4z"/><path d="M1250 239.5 a6 6 0 0 1 0 10 z"/><path d="M1251.5 236 a9.5 9.5 0 0 1 0 17" fill="none" stroke="#5f7784" stroke-width="2"/>
<path d="M1239.5 285.5 h4 l6 -5 v16 l-6 -5 h-4z"/><path d="M1251 285 a4 4 0 0 1 0 7 z"/>
</g>
<g stroke="#5f7784" fill="none" stroke-width="2.4">
<rect x="1240" y="326" width="11" height="15" rx="1.5" transform="rotate(-45 1247 333)"/>
<path d="M1248 322 a11 11 0 0 1 8 8" stroke-width="1.8"/>
<rect x="1240" y="370" width="11" height="15" rx="1.5" transform="rotate(45 1247 377)"/>
<path d="M1237 375 a11 11 0 0 1 8 -8" stroke-width="1.8"/>
</g>
<g fill="#5f7784"><path d="M1237 414 h5 l2 -3 h6 l2 3 h5 v14 h-20 z"/></g><circle cx="1247" cy="421" r="3.8" fill="none" stroke="#efefef" stroke-width="2"/>
<g stroke="#5f7784" fill="none" stroke-width="2"><circle cx="1245" cy="463" r="6"/><path d="M1249.5 467.5 l5 5" stroke-width="2.6"/><path d="M1242 463 h6 M1245 460 v6" stroke-width="1.5"/></g>
<g stroke="#5f7784" fill="none" stroke-width="1.8"><path d="M1252 502 v14 l-11 -7 z"/><circle cx="1247" cy="553" r="7"/><rect x="1240.5" y="590.5" width="13" height="13" rx="1"/></g>
<g fill="#5f7784"><circle cx="1241" cy="641" r="2"/><circle cx="1247" cy="641" r="2"/><circle cx="1253" cy="641" r="2"/></g>
</svg>
<svg class="a" style="left:0;top:0" width="1339" height="697" viewBox="0 0 1339 697"><g fill="none" stroke-linecap="round" stroke-linejoin="round">
<polyline points="97,234 389,234 389,336 98,335 98,234" stroke="#e60000" stroke-width="3"/>
<polyline points="90,340 397,340 398,442 96,441 96,340" stroke="#22e022" stroke-width="3"/>
<polyline points="97,445 383,445 383,551 98,550 98,445" stroke="#e81ee8" stroke-width="3"/>
<polyline points="846,323 957,323 958,437 846,437 846,323" stroke="#e60000" stroke-width="3"/>
<polyline points="1015,320 1138,320 1138,435 1017,435 1017,320" stroke="#22e022" stroke-width="3"/>
<polyline points="927,228.5 1048,228.5 1049,344 933,344 933,238" stroke="#e81ee8" stroke-width="3"/>
<polyline points="389,288 846,371" stroke="#e60000" stroke-width="3"/>
<polyline points="833.442507364068,361.08489139250037 846,371 830.7579416610196,375.86617484181534" stroke="#e60000" stroke-width="3"/>
<polyline points="146,284 344,282 390,289 890,330" stroke="#f5f500" stroke-width="3"/>
<polyline points="876.5849337494458,321.2801377595033 890,330 875.2692967282244,336.2455088758963" stroke="#f5f500" stroke-width="3"/>
<polyline points="144,396 330,394 420,389 1056,335" stroke="#f5f500" stroke-width="3"/>
<polyline points="1041.2879997892937,328.7105604542073 1056,335 1042.5589721925373,343.6797909812976" stroke="#f5f500" stroke-width="3"/>
<polyline points="397,390 1015,408" stroke="#22e022" stroke-width="3"/>
<polyline points="1001.0975171189112,400.0803428267991 1015,408 1000.660136873933,415.09706457105074" stroke="#22e022" stroke-width="3"/>
<polyline points="144,500 342,497 970,249" stroke="#f5f500" stroke-width="3"/>
<polyline points="954.1012981950114,247.20242359938393 970,249 959.6193004006038,261.17542918451323" stroke="#f5f500" stroke-width="3"/>
<polyline points="384,503 923,283" stroke="#e81ee8" stroke-width="3"/>
<polyline points="907.08181052306,281.3840656646276 923,283 912.7589911295869,295.2931581506186" stroke="#e81ee8" stroke-width="3"/>
</g></svg>
</body></html>
